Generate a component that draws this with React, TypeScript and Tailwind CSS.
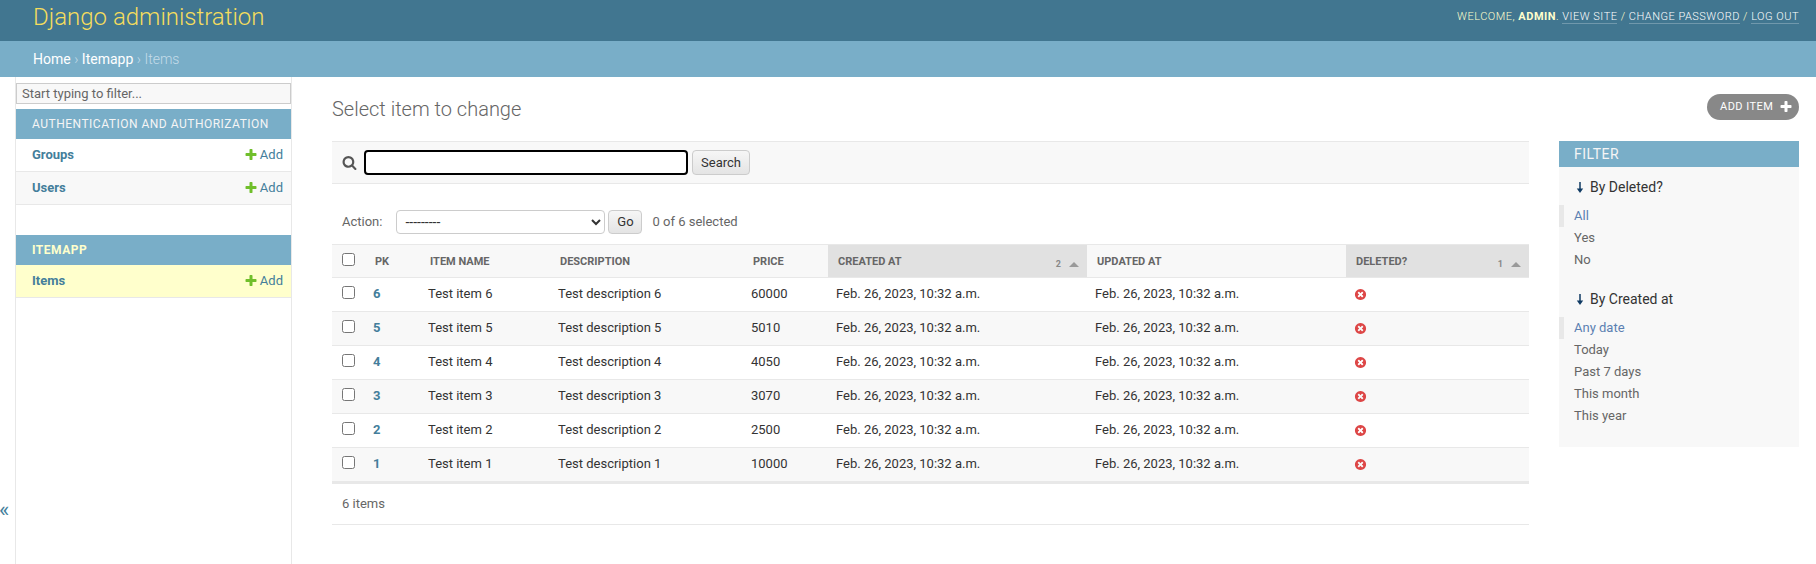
const rows = [
  { id: 6, name: "Test item 6", desc: "Test description 6", price: "60000" },
  { id: 5, name: "Test item 5", desc: "Test description 5", price: "5010" },
  { id: 4, name: "Test item 4", desc: "Test description 4", price: "4050" },
  { id: 3, name: "Test item 3", desc: "Test description 3", price: "3070" },
  { id: 2, name: "Test item 2", desc: "Test description 2", price: "2500" },
  { id: 1, name: "Test item 1", desc: "Test description 1", price: "10000" },
];

const PLUS =
  "M1600 736v192q0 40-28 68t-68 28h-416v416q0 40-28 68t-68 28h-192q-40 0-68-28t-28-68v-416h-416q-40 0-68-28t-28-68v-192q0-40 28-68t68-28h416v-416q0-40 28-68t68-28h192q40 0 68 28t28 68v416h416q40 0 68 28t28 68z";

const PlusIcon = ({ className }: { className: string }) => (
  <svg viewBox="0 0 1792 1792" className={className}>
    <path d={PLUS} fill="currentColor" />
  </svg>
);

const NoIcon = () => (
  <svg viewBox="0 0 1792 1792" className="h-[13px] w-[13px]">
    <path
      fill="#dd4646"
      d="M1277 1122q0-26-19-45l-181-181 181-181q19-19 19-45 0-27-19-46l-90-90q-19-19-46-19-26 0-45 19l-181 181-181-181q-19-19-45-19-27 0-46 19l-90 90q-19 19-19 46 0 26 19 45l181 181-181 181q-19 19-19 45 0 27 19 46l90 90q19 19 46 19 26 0 45-19l181-181 181 181q19 19 45 19 27 0 46-19l90-90q19-19 19-46zm387-226q0 209-103 385.500t-279.500 279.500-385.500 103-385.500-103-279.500-279.500-103-385.500 103-385.500 279.500-279.500 385.500-103 385.500 103 279.500 279.500 103 385.500z"
    />
  </svg>
);

const SearchIcon = () => (
  <svg viewBox="0 0 1792 1792" className="h-[15px] w-[15px] shrink-0 text-[#555]">
    <path
      fill="currentColor"
      d="M1216 832q0-185-131.500-316.500t-316.500-131.500-316.500 131.500-131.500 316.500 131.500 316.500 316.500 131.500 316.500-131.500 131.500-316.500zm512 832q0 52-38 90t-90 38q-54 0-90-38l-343-342q-179 124-399 124-143 0-273.500-55.500t-225-150-150-225-55.500-273.500 55.500-273.500 150-225 225-150 273.500-55.500 273.500 55.500 225 150 150 225 55.500 273.500q0 220-124 399l343 343q37 37 37 90z"
    />
  </svg>
);

const ArrowDown = () => (
  <svg viewBox="0 0 8 11" className="mr-[6px] h-[11px] w-[8px] shrink-0 text-[#0f3a63]">
    <path d="M4 0V9" stroke="currentColor" strokeWidth="1.5" fill="none" />
    <path d="M0.8 6.6L4 11L7.2 6.6Z" fill="currentColor" />
  </svg>
);

const SideRow = ({ label, alt, current }: { label: string; alt?: boolean; current?: boolean }) => (
  <div
    className={`flex h-[33px] items-center justify-between border-b border-[#e8e8e8] pl-4 pr-2 text-[13px] ${
      current ? "bg-[#ffffcc]" : alt ? "bg-[#f8f8f8]" : "bg-white"
    }`}
  >
    <span className="font-bold text-[#447e9b]">{label}</span>
    <span className="flex items-center gap-[2px] text-[#447e9b]">
      <PlusIcon className="h-[14px] w-[14px] text-[#70bf2b]" />
      Add
    </span>
  </div>
);

const Sidebar = () => (
  <aside className="flex w-[292px] shrink-0">
    <div className="flex w-[15px] shrink-0 flex-col items-start justify-end pb-[42px] text-[22px] leading-[24px] text-[#447e9b]">
      <span className="-ml-[1px]">«</span>
    </div>
    <div className="flex-1 border-x border-[#e8e8e8] pt-[6px]">
      <input
        placeholder="Start typing to filter..."
        className="mb-[5px] block h-[21px] w-full border border-[#cccccc] bg-[#f8f8f8] px-[5px] text-[13px] placeholder:text-[#666]"
      />
      <div className="flex h-[30px] items-center bg-[#79aec8] pl-4 text-[12px] tracking-[0.5px] text-[#f5f5f5]">
        AUTHENTICATION AND AUTHORIZATION
      </div>
      <SideRow label="Groups" />
      <SideRow label="Users" alt />
      <div className="mt-[30px] flex h-[30px] items-center bg-[#79aec8] pl-4 text-[12px] font-bold tracking-[0.5px] text-[#ffffcc]">
        ITEMAPP
      </div>
      <SideRow label="Items" current />
    </div>
  </aside>
);

const Th = ({ label, sort }: { label: string; sort?: string }) => (
  <th
    className={`h-[33px] border-t border-b border-[#e8e8e8] px-[10px] text-left align-top text-[11px] font-bold text-[#666] ${
      sort ? "bg-[#e1e1e1]" : "bg-[#f8f8f8]"
    }`}
  >
    <div className="flex justify-between pt-[10px] leading-[14px]">
      <span>{label}</span>
      {sort && (
        <span className="-mr-[2px] flex items-center gap-[8px] pt-[3px] text-[9px] font-bold leading-[12px] text-[#888]">
          {sort}
          <span className="h-0 w-0 border-x-[5px] border-b-[5px] border-x-transparent border-b-[#999]" />
        </span>
      )}
    </div>
  </th>
);

const FilterGroup = ({ title, items }: { title: string; items: string[] }) => (
  <div className="mb-[16px]">
    <div className="flex h-[24px] items-center pl-[17px] text-[14px] text-[#333]">
      <ArrowDown />
      {title}
    </div>
    <ul className="mt-[6px]">
      {items.map((item, i) => (
        <li
          key={item}
          className={`flex h-[22px] items-center border-l-[5px] pl-[10px] text-[13px] ${
            i === 0 ? "border-[#e8e8e8] text-[#5b80b2]" : "border-transparent text-[#666]"
          }`}
        >
          {item}
        </li>
      ))}
    </ul>
  </div>
);

export default function App() {
  return (
    <div className="flex min-h-screen flex-col bg-white font-['Roboto',sans-serif] text-[14px] text-[#333]">
      <header className="flex h-[41px] items-start justify-between bg-[#417690] pl-[33px] pr-[17px]">
        <div className="text-[24px] font-light leading-[34px] text-[#f5dd5d]">Django administration</div>
        <div className="pt-[9px] text-[11px] font-light leading-[15px] tracking-[0.5px] text-[#ffffcc]">
          WELCOME, <strong className="font-bold">ADMIN</strong>.{" "}
          <span className="border-b border-white/25 text-white">VIEW SITE</span> /{" "}
          <span className="border-b border-white/25 text-white">CHANGE PASSWORD</span> /{" "}
          <span className="border-b border-white/25 text-white">LOG OUT</span>
        </div>
      </header>
      <nav className="flex h-[36px] items-center bg-[#79aec8] px-[33px] text-[14px] text-white">
        Home <span className="mx-[3.5px] font-light text-[#c4dce8]">›</span> Itemapp{" "}
        <span className="mx-[3.5px] font-light text-[#c4dce8]">›</span>{" "}
        <span className="font-light text-[#c4dce8]">Items</span>
      </nav>
      <div className="flex flex-1">
        <Sidebar />
        <main className="flex-1 pl-[40px] pr-[17px] pt-[17px]">
          <div className="flex items-start justify-between">
            <h1 className="mt-[3px] text-[20px] font-light leading-[24px] text-[#666]">Select item to change</h1>
            <div className="flex h-[26px] w-[92px] items-center justify-between rounded-[15px] bg-[#888] pl-[13px] pr-[6px] text-[11px] tracking-[0.45px] text-white">
              ADD ITEM
              <PlusIcon className="h-[14px] w-[14px] text-white" />
            </div>
          </div>
          <div className="mt-[20px] flex gap-[30px]">
            <div className="w-[1197px]">
              <div className="flex h-[43px] items-center border-y border-[#e8e8e8] bg-[#f8f8f8] pl-[10px]">
                <SearchIcon />
                <input className="ml-[7px] h-[25px] w-[324px] rounded-[4px] border-2 border-black bg-white" />
                <button className="ml-[4px] h-[25px] w-[58px] rounded-[4px] border border-[#cccccc] bg-gradient-to-b from-[#f6f6f6] to-[#e4e4e4] text-[13px] text-[#333]">
                  Search
                </button>
              </div>
              <div className="mt-[26px] flex h-[24px] items-center pl-[10px] text-[13px] text-[#666]">
                <span>Action:</span>
                <select className="ml-[14px] h-[24px] w-[209px] rounded-[4px] border border-[#cccccc] bg-white pl-[4px] text-[14px] text-[#333]">
                  <option>---------</option>
                </select>
                <button className="ml-[3px] h-[24px] w-[34px] rounded-[4px] border border-[#cccccc] bg-gradient-to-b from-[#f6f6f6] to-[#e4e4e4] text-[13px] text-[#333]">
                  Go
                </button>
                <span className="ml-[10px]">0 of 6 selected</span>
              </div>
              <table className="mt-[10px] w-[1197px] table-fixed border-collapse">
                <colgroup>
                  <col className="w-[33px]" />
                  <col className="w-[55px]" />
                  <col className="w-[130px]" />
                  <col className="w-[193px]" />
                  <col className="w-[85px]" />
                  <col className="w-[259px]" />
                  <col className="w-[259px]" />
                  <col className="w-[183px]" />
                </colgroup>
                <thead>
                  <tr>
                    <th className="h-[33px] border-y border-[#e8e8e8] bg-[#f8f8f8] pl-[10px] text-left align-top">
                      <input type="checkbox" className="mt-[8px] block" />
                    </th>
                    <Th label="PK" />
                    <Th label="ITEM NAME" />
                    <Th label="DESCRIPTION" />
                    <Th label="PRICE" />
                    <Th label="CREATED AT" sort="2" />
                    <Th label="UPDATED AT" />
                    <Th label="DELETED?" sort="1" />
                  </tr>
                </thead>
                <tbody>
                  {rows.map((row, i) => (
                    <tr
                      key={row.id}
                      className={`h-[34px] border-b border-[#e8e8e8] text-[13px] ${
                        i % 2 ? "bg-[#f8f8f8]" : "bg-white"
                      }`}
                    >
                      <td className="pl-[10px] align-top">
                        <input type="checkbox" className="mt-[8px] block" />
                      </td>
                      <td className="px-[8px] pb-[2px] font-bold text-[#447e9b]">{row.id}</td>
                      <td className="px-[8px] pb-[2px]">{row.name}</td>
                      <td className="px-[8px] pb-[2px]">{row.desc}</td>
                      <td className="px-[8px] pb-[2px]">{row.price}</td>
                      <td className="px-[8px] pb-[2px]">Feb. 26, 2023, 10:32 a.m.</td>
                      <td className="px-[8px] pb-[2px]">Feb. 26, 2023, 10:32 a.m.</td>
                      <td className="px-[8px]">
                        <NoIcon />
                      </td>
                    </tr>
                  ))}
                </tbody>
              </table>
              <div className="flex h-[43px] items-center border-t-2 border-b border-[#e8e8e8] pl-[10px] text-[13px] text-[#666]">
                6 items
              </div>
            </div>
            <section className="h-[306px] w-[240px] bg-[#f8f8f8]">
              <div className="flex h-[26px] items-center bg-[#79aec8] pl-[15px] text-[14px] tracking-[0.5px] text-[#f5f5f5]">
                FILTER
              </div>
              <div className="pt-[8px]">
                <FilterGroup title="By Deleted?" items={["All", "Yes", "No"]} />
                <FilterGroup
                  title="By Created at"
                  items={["Any date", "Today", "Past 7 days", "This month", "This year"]}
                />
              </div>
            </section>
          </div>
        </main>
      </div>
    </div>
  );
}
